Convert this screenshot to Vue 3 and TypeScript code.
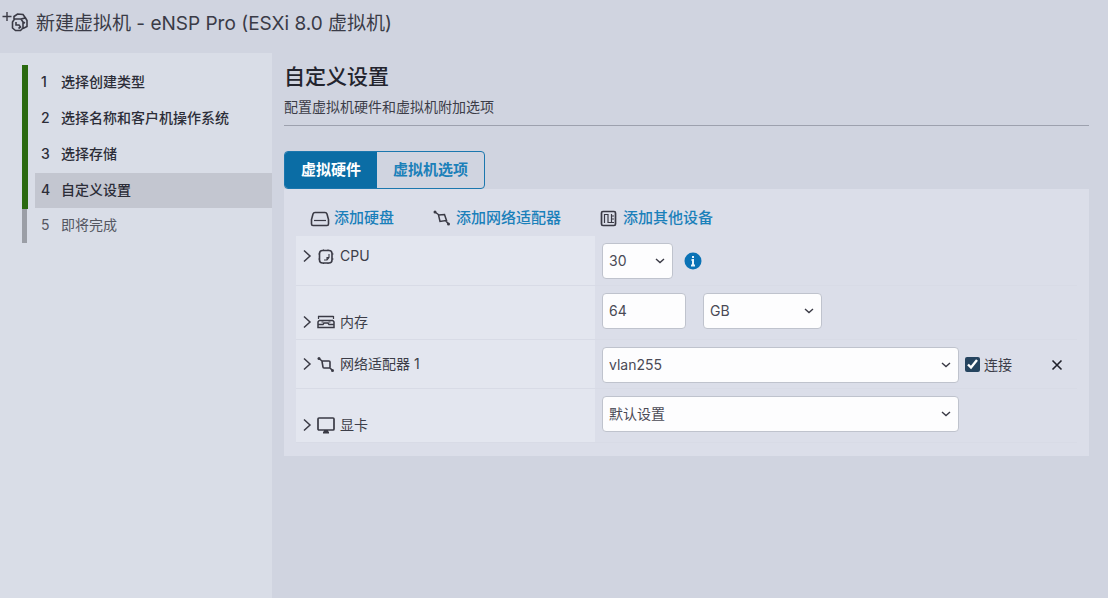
<script setup lang="ts">
import { ref } from 'vue'

interface Step {
  id: number
  label: string
  state: 'done' | 'current' | 'todo'
}

const steps: Step[] = [
  { id: 1, label: '选择创建类型', state: 'done' },
  { id: 2, label: '选择名称和客户机操作系统', state: 'done' },
  { id: 3, label: '选择存储', state: 'done' },
  { id: 4, label: '自定义设置', state: 'current' },
  { id: 5, label: '即将完成', state: 'todo' },
]

const cpu = ref('30')
const memory = ref('64')
const unit = ref('GB')
const network = ref('vlan255')
const video = ref('默认设置')
const connected = ref(true)
</script>

<template>
  <div class="wizard">
    <header class="top">
      <svg class="vm-icon" viewBox="0 0 28 22" aria-hidden="true">
        <path d="M7 1v9M2.500 5.500h9" stroke-width="1.400" />
        <path d="M14 8V5.500l3.500-2.500 5.500.500 2.500 3.500M14.500 8h6.500l2 3v6l-2.500 2.500h-5L12.500 17v-6zM21 8l4.500-1 1.500 2.500v6L23 17.500M16 11v3h3l1.500 2-2 1.500M23 11l2 1" stroke-width="1.600" />
      </svg>
      <h1>新建虚拟机 - eNSP Pro (ESXi 8.0 虚拟机)</h1>
    </header>

    <nav class="side" aria-label="步骤">
      <ol>
        <li v-for="s in steps" :key="s.id" :class="s.state">
          <button type="button"><span class="num">{{ s.id }}</span>{{ s.label }}</button>
        </li>
      </ol>
    </nav>

    <main>
      <h2>自定义设置</h2>
      <p class="sub">配置虚拟机硬件和虚拟机附加选项</p>

      <div class="tabs" role="tablist">
        <button type="button" role="tab" aria-selected="true" class="active">虚拟硬件</button>
        <button type="button" role="tab" aria-selected="false">虚拟机选项</button>
      </div>

      <section class="panel">
        <div class="tools">
          <button type="button">
            <svg class="ic" viewBox="0 0 20 20" aria-hidden="true">
              <path d="M5 4.500h10q1.500 0 2 1.500l1.500 5.500v4.500q0 1.500-1.500 1.500H3Q1.500 17.500 1.500 16v-4.500L3 6q.5-1.500 2-1.500z" stroke-width="1.600" />
              <path d="M4 12.500h12" stroke-width="1.200" />
            </svg>
            添加硬盘
          </button>
          <button type="button">
            <svg class="ic" viewBox="0 0 20 20" aria-hidden="true">
              <path d="M3 4l4 3M6.500 7l6-.5 2 6-6.500 1zM13.500 12.500l3 3.500" stroke-width="1.500" />
              <circle cx="3" cy="4" r="1.500" class="dot" /><circle cx="16.500" cy="16" r="1.500" class="dot" />
            </svg>
            添加网络适配器
          </button>
          <button type="button">
            <svg class="ic" viewBox="0 0 20 20" aria-hidden="true">
              <rect x="2.500" y="3.500" width="14" height="14" rx="1.500" stroke-width="1.700" />
              <path d="M5.500 6v9M5.500 6.500h3.500v8.500M12.500 6v9M12.500 8h2.500M12.500 11h2.500M9 14.500h6" stroke-width="1.200" />
            </svg>
            添加其他设备
          </button>
        </div>

        <table>
          <tbody>
            <tr class="short top-label">
              <th scope="row">
                <button type="button" class="row-name">
                  <svg class="chev" viewBox="0 0 10 14" aria-hidden="true"><path d="M2 1.500L8 7l-6 5.500" /></svg>
                  <svg class="ic" viewBox="0 0 20 20" aria-hidden="true">
                    <rect x="3.500" y="4.500" width="12.500" height="12.500" rx="3" stroke-width="1.600" />
                    <path d="M2.500 8h1M2.500 13h1M7.500 3.500v1M12 3.500v1M16 8h1.500M16 13h1.500M7.500 17v1M12 17v1M13 8v3.500L11 14H8M11 14v-2.500h2" stroke-width="1.100" />
                  </svg>
                  CPU
                </button>
              </th>
              <td>
                <div class="fields">
                  <span class="pick w-cpu">
                    <select v-model="cpu" aria-label="CPU"><option>30</option></select>
                    <svg viewBox="0 0 10 6" aria-hidden="true"><path d="M1 1l4 3.500L9 1" /></svg>
                  </span>
                  <button type="button" class="info" aria-label="信息">
                    <svg viewBox="0 0 18 18" aria-hidden="true">
                      <circle cx="9" cy="9" r="8.500" />
                      <path d="M9 4v2M7.500 8H9v5.500M7 13.500h4" />
                    </svg>
                  </button>
                </div>
              </td>
            </tr>
            <tr class="tall">
              <th scope="row">
                <button type="button" class="row-name">
                  <svg class="chev" viewBox="0 0 10 14" aria-hidden="true"><path d="M2 1.500L8 7l-6 5.500" /></svg>
                  <svg class="ic" viewBox="0 0 20 20" aria-hidden="true">
                    <path d="M2 4.500h15.500M3 8.500h14M3 8.500L2 10v5.500h16V10l-1-1.500M2 12.500h5l1-1.500h4l1 1.500h5" stroke-width="1.500" />
                    <path d="M2.500 4v3M17.500 4v3M5.500 10h2M12.500 10h2" stroke-width="1.200" />
                  </svg>
                  内存
                </button>
              </th>
              <td>
                <div class="fields">
                  <input v-model="memory" class="w-mem" type="text" aria-label="内存" />
                  <span class="pick w-unit">
                    <select v-model="unit" aria-label="单位"><option>GB</option></select>
                    <svg viewBox="0 0 10 6" aria-hidden="true"><path d="M1 1l4 3.500L9 1" /></svg>
                  </span>
                </div>
              </td>
            </tr>
            <tr class="short">
              <th scope="row">
                <button type="button" class="row-name">
                  <svg class="chev" viewBox="0 0 10 14" aria-hidden="true"><path d="M2 1.500L8 7l-6 5.500" /></svg>
                  <svg class="ic" viewBox="0 0 20 20" aria-hidden="true">
                    <path d="M3 4.500L6 7M6 7.500Q6 7 7 7h6q1 0 1 1v5q0 1-1 1H8q-1 0-1-1zM14 14l2 2" stroke-width="1.600" />
                    <circle cx="3" cy="4.500" r="1.500" class="dot" /><circle cx="16.500" cy="16.500" r="1.500" class="dot" />
                  </svg>
                  网络适配器 1
                </button>
              </th>
              <td>
                <div class="fields">
                  <span class="pick w-wide">
                    <select v-model="network" aria-label="网络适配器 1"><option>vlan255</option></select>
                    <svg viewBox="0 0 10 6" aria-hidden="true"><path d="M1 1l4 3.500L9 1" /></svg>
                  </span>
                  <label class="check"><input v-model="connected" type="checkbox" />连接</label>
                  <button type="button" class="remove" aria-label="移除">
                    <svg viewBox="0 0 12 12" aria-hidden="true"><path d="M1.500 1.500l9 9M10.500 1.500l-9 9" /></svg>
                  </button>
                </div>
              </td>
            </tr>
            <tr class="tall">
              <th scope="row">
                <button type="button" class="row-name">
                  <svg class="chev" viewBox="0 0 10 14" aria-hidden="true"><path d="M2 1.500L8 7l-6 5.500" /></svg>
                  <svg class="ic" viewBox="0 0 20 20" aria-hidden="true">
                    <rect x="2" y="3" width="16" height="12" rx="1" stroke-width="1.700" />
                    <path d="M8 16h4M7 17.500h6" stroke-width="2" />
                  </svg>
                  显卡
                </button>
              </th>
              <td>
                <div class="fields">
                  <span class="pick w-wide">
                    <select v-model="video" aria-label="显卡"><option>默认设置</option></select>
                    <svg viewBox="0 0 10 6" aria-hidden="true"><path d="M1 1l4 3.500L9 1" /></svg>
                  </span>
                </div>
              </td>
            </tr>
          </tbody>
        </table>
      </section>
    </main>
  </div>
</template>

<style>
body {
  margin: 0;
  background: #d0d4e0;
}
</style>

<style scoped>
.wizard {
  display: grid;
  grid-template-columns: 272px 1fr;
  grid-template-rows: 53px 1fr;
  min-height: 100vh;
  background: #d0d4e0;
  color: #3c3d48;
  font-family: Inter, 'Noto Sans CJK SC', sans-serif;
  font-size: 14px;
  line-height: 20px;
}
.wizard * {
  box-sizing: border-box;
}
button,
input,
select {
  margin: 0;
  padding: 0;
  border: 0;
  background: none;
  color: inherit;
  font: inherit;
}
button {
  cursor: pointer;
}
svg {
  display: block;
  flex: none;
  fill: none;
  stroke: #3a3a45;
}
.dot {
  fill: #3a3a45;
  stroke: none;
}
.top {
  grid-column: 1 / -1;
  display: flex;
  align-items: flex-start;
  gap: 8px;
  padding-top: 11px;
}
.vm-icon {
  width: 28px;
  height: 22px;
}
h1 {
  margin: 0;
  color: #3a3b47;
  font-size: 19px;
  font-weight: 400;
  line-height: 26px;
}
.side {
  padding: 12px 0 0 22px;
  background: #d9dde7;
}
ol {
  margin: 0;
  padding: 0;
  list-style: none;
}
li {
  height: 36px;
  padding: 0 0 1px 7px;
  border-left: 6px solid #2b6a10;
}
li button {
  display: flex;
  align-items: center;
  width: 100%;
  height: 35px;
  padding: 0 0 2px 6px;
  color: #2c2d38;
  font-weight: 500;
  text-align: left;
}
.num {
  width: 20px;
}
.current button {
  background: #c3c6d0;
}
.todo {
  height: 34px;
  border-left: 5px solid #9b9ea6;
  padding-left: 8px;
}
.todo button {
  height: 33px;
  color: #555762;
  font-weight: 400;
}
main {
  padding: 10px 19px 0 12px;
}
h2 {
  margin: 0;
  color: #23242e;
  font-size: 21px;
  font-weight: 500;
  line-height: 28px;
}
.sub {
  margin: 0 0 25px;
  padding: 6px 0 8px;
  border-bottom: 1px solid #9da1ae;
}
.tabs {
  display: flex;
  width: max-content;
  border: 1px solid #1b77ae;
  border-radius: 4px;
  overflow: hidden;
}
.tabs button {
  height: 36px;
  padding: 0 16px;
  color: #1b80b9;
  font-size: 15px;
  font-weight: 700;
}
.tabs .active {
  background: #0b6da5;
  color: #fff;
}
.panel {
  padding: 13px 12px;
  background: #dbdee9;
}
.tools {
  display: flex;
  gap: 38px;
  height: 34px;
  padding: 6px 0 0 14px;
}
.tools button {
  display: flex;
  align-items: center;
  gap: 4px;
  height: 20px;
  color: #1a80ba;
  font-size: 15px;
  font-weight: 500;
}
.ic {
  width: 20px;
  height: 20px;
}
table {
  width: 100%;
  border-collapse: collapse;
  table-layout: fixed;
}
.short {
  height: 49px;
}
.tall {
  height: 54px;
}
th,
td {
  padding: 0;
  border-bottom: 1px solid #d8dbe6;
}
th {
  width: 299px;
  padding: 7px 6px;
  background: #e3e6ef;
  font-weight: 400;
  text-align: left;
  vertical-align: middle;
}
.tall th {
  vertical-align: bottom;
}
.top-label th {
  padding-top: 10px;
  vertical-align: top;
}
td {
  padding: 7px 0 0 7px;
  vertical-align: top;
}
.row-name {
  display: flex;
  align-items: center;
  gap: 4px;
}
.chev {
  width: 10px;
  height: 14px;
  stroke-width: 1.500;
}
.fields {
  display: flex;
  align-items: center;
}
.pick {
  display: grid;
  align-items: center;
}
.pick select,
.pick svg {
  grid-area: 1 / 1;
}
.pick svg {
  justify-self: end;
  width: 10px;
  height: 6px;
  margin-right: 8px;
  stroke-width: 1.400;
  pointer-events: none;
}
select,
.w-mem {
  width: 100%;
  height: 36px;
  padding: 0 6px;
  border: 1px solid #bfc3cd;
  border-radius: 4px;
  background: #fdfdfe;
  color: #4a4a55;
  appearance: none;
}
.w-cpu {
  width: 71px;
}
.w-mem {
  width: 84px;
  margin-right: 17px;
}
.w-unit {
  width: 119px;
}
.w-wide {
  width: 357px;
}
.info {
  margin-left: 11px;
}
.info svg {
  width: 18px;
  height: 18px;
  stroke: #e8f4fb;
  stroke-width: 2;
}
.info circle {
  fill: #0a72b5;
  stroke: none;
}
.check {
  display: flex;
  align-items: center;
  gap: 4px;
  margin-left: 6px;
}
.check input {
  width: 15px;
  height: 15px;
  accent-color: #25445f;
}
.remove {
  margin: 0 14px 0 auto;
}
.remove svg {
  width: 12px;
  height: 12px;
  stroke: #20212b;
  stroke-width: 1.600;
}
</style>
